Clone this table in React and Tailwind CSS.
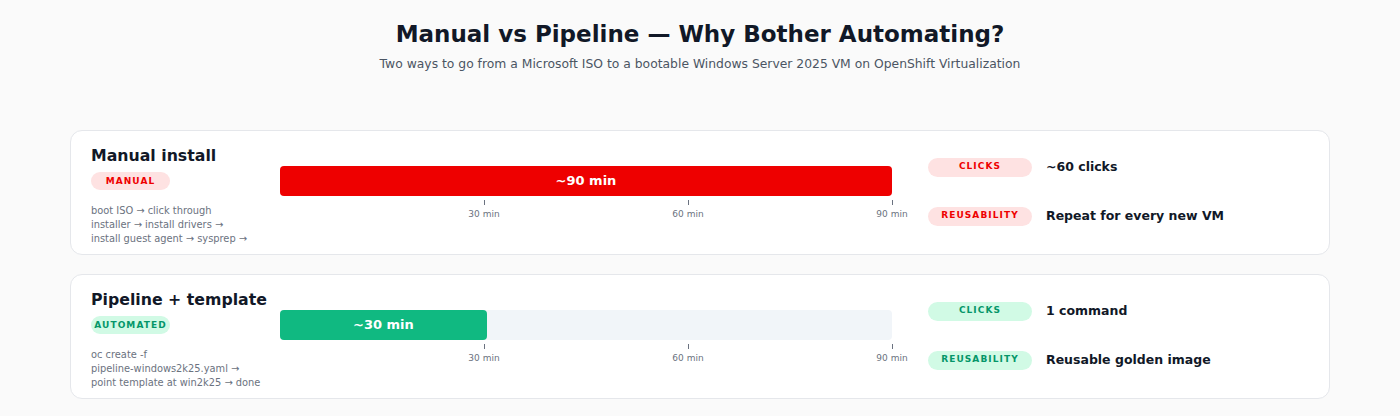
const rows = [
  {
    title: "Manual install",
    tag: "MANUAL",
    desc: ["boot ISO → click through", "installer → install drivers →", "install guest agent → sysprep →"],
    minutes: 90,
    fill: 100,
    tone: "red",
    stats: [
      ["CLICKS", "~60 clicks"],
      ["REUSABILITY", "Repeat for every new VM"],
    ],
  },
  {
    title: "Pipeline + template",
    tag: "AUTOMATED",
    desc: ["oc create -f", "pipeline-windows2k25.yaml →", "point template at win2k25 → done"],
    minutes: 30,
    fill: 33.8,
    tone: "green",
    stats: [
      ["CLICKS", "1 command"],
      ["REUSABILITY", "Reusable golden image"],
    ],
  },
];

const tones = {
  red: {
    pill: "bg-[#fee2e2] text-[#ee0000]",
    bar: "bg-[#ee0000]",
  },
  green: {
    pill: "bg-[#d1fae5] text-[#059669]",
    bar: "bg-[#10b981]",
  },
};

function Pill({ tone, children, className = "" }) {
  return (
    <span
      className={`inline-flex items-center justify-center rounded-full text-[9px] font-bold tracking-[0.12em] ${tones[tone].pill} ${className}`}
    >
      {children}
    </span>
  );
}

function TimeBar({ minutes, fill, tone }) {
  return (
    <div className="w-[612px] shrink-0 pt-[21px]">
      <div className="h-[30px] rounded-[4px] bg-[#f1f5f9]">
        <div
          className={`flex h-full items-center justify-center rounded-[4px] text-[13px] font-bold text-white ${tones[tone].bar}`}
          style={{ width: `${fill}%` }}
        >
          ~{minutes} min
        </div>
      </div>
      <div className="grid grid-cols-3">
        {[30, 60, 90].map((m) => (
          <div key={m} className="flex justify-end">
            <div className="flex w-0 flex-col items-center">
              <div className="mt-[4px] h-[5px] w-px bg-[#6b7280]" />
              <span className="mt-[3px] whitespace-nowrap text-[9px] text-[#6b7280]">{m} min</span>
            </div>
          </div>
        ))}
      </div>
    </div>
  );
}

function Row({ row }) {
  return (
    <div className="flex rounded-xl border border-[#e5e7eb] bg-white px-[20px] pt-[14px] pb-[8px]">
      <div className="w-[168px] shrink-0">
        <h2 className="whitespace-nowrap text-[15.75px] font-bold leading-[22px] text-[#111827]">{row.title}</h2>
        <Pill tone={row.tone} className="mt-[4px] h-[18px] w-[79px]">
          {row.tag}
        </Pill>
        <p className="mt-[13px] text-[9.85px] leading-[14px] text-[#6b7280]">
          {row.desc.map((line) => (
            <span key={line} className="block whitespace-nowrap">
              {line}
            </span>
          ))}
        </p>
      </div>
      <div className="ml-[21px]">
        <TimeBar minutes={row.minutes} fill={row.fill} tone={row.tone} />
      </div>
      <div className="ml-[36px] flex flex-col justify-center gap-[30px] pb-[7px]">
        {row.stats.map(([k, v]) => (
          <div key={k} className="flex items-center gap-[14px]">
            <Pill tone={row.tone} className="h-[19px] w-[104px]">
              {k}
            </Pill>
            <span className="text-[12.5px] font-bold text-[#111827]">{v}</span>
          </div>
        ))}
      </div>
    </div>
  );
}

export default function App() {
  return (
    <div className="min-h-[416px] bg-[#fafafa] px-[70px] pt-[18px] pb-[18px] font-['DejaVu_Sans',sans-serif]">
      <header className="text-center">
        <h1 className="text-[23px] font-bold leading-[32px] text-[#111827]">
          Manual vs Pipeline — Why Bother Automating?
        </h1>
        <p className="mt-[5px] text-[12.35px] text-[#4b5563]">
          Two ways to go from a Microsoft ISO to a bootable Windows Server 2025 VM on OpenShift Virtualization
        </p>
      </header>
      <div className="mt-[56px] flex flex-col gap-[19px]">
        {rows.map((r) => (
          <Row key={r.title} row={r} />
        ))}
      </div>
    </div>
  );
}
